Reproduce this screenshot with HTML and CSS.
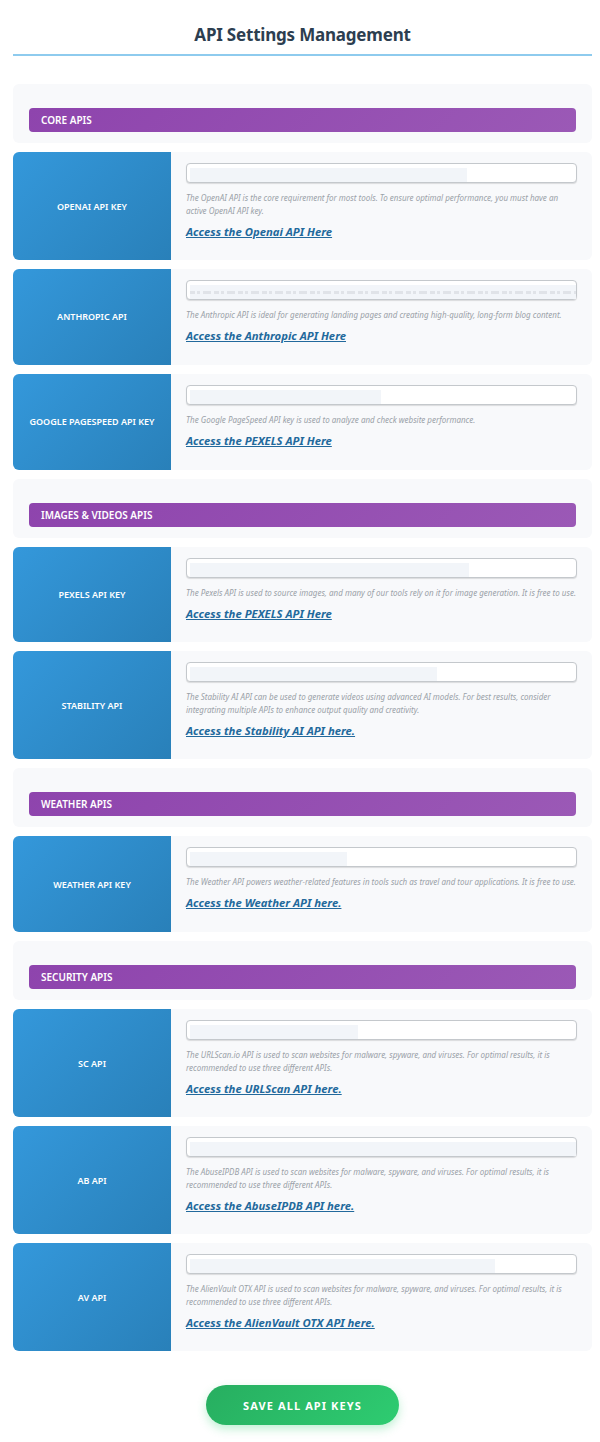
FILE: index.html
```html
<!DOCTYPE html>
<html lang="en">
<head>
    <meta charset="UTF-8">
    <meta name="viewport" content="width=device-width, initial-scale=1.0">
    <title>API Settings Management</title>
    <link rel="stylesheet" href="styles.css">
</head>
<body>
    <div class="wrap">
        <h1 class="page-title">API Settings Management</h1>

        <!-- Core APIs -->
        <div class="group"><h2 class="group-bar">Core APIs</h2></div>

        <div class="row">
            <div class="row-label">OpenAI API Key</div>
            <div class="row-body">
                <div class="key-input"><span class="key-mask" style="width: 277px"></span></div>
                <p class="desc">The OpenAI API is the core requirement for most tools. To ensure optimal performance, you must have an active OpenAI API key.</p>
                <a class="row-link" href="#">Access the Openai API Here</a>
            </div>
        </div>

        <div class="row">
            <div class="row-label">Anthropic API</div>
            <div class="row-body">
                <div class="key-input"><span class="key-mask key-mask-filled" style="width: 386px"></span></div>
                <p class="desc">The Anthropic API is ideal for generating landing pages and creating high-quality, long-form blog content.</p>
                <a class="row-link" href="#">Access the Anthropic API Here</a>
            </div>
        </div>

        <div class="row">
            <div class="row-label">Google PageSpeed API Key</div>
            <div class="row-body">
                <div class="key-input"><span class="key-mask" style="width: 191px"></span></div>
                <p class="desc">The Google PageSpeed API key is used to analyze and check website performance.</p>
                <a class="row-link" href="#">Access the PEXELS API Here</a>
            </div>
        </div>

        <!-- Images & videos -->
        <div class="group"><h2 class="group-bar">Images &amp; Videos APIs</h2></div>

        <div class="row">
            <div class="row-label">Pexels API Key</div>
            <div class="row-body">
                <div class="key-input"><span class="key-mask" style="width: 279px"></span></div>
                <p class="desc">The Pexels API is used to source images, and many of our tools rely on it for image generation. It is free to use.</p>
                <a class="row-link" href="#">Access the PEXELS API Here</a>
            </div>
        </div>

        <div class="row">
            <div class="row-label">Stability API</div>
            <div class="row-body">
                <div class="key-input"><span class="key-mask" style="width: 247px"></span></div>
                <p class="desc">The Stability AI API can be used to generate videos using advanced AI models. For best results, consider integrating multiple APIs to enhance output quality and creativity.</p>
                <a class="row-link" href="#">Access the Stability AI API here.</a>
            </div>
        </div>

        <!-- Weather -->
        <div class="group"><h2 class="group-bar">Weather APIs</h2></div>

        <div class="row">
            <div class="row-label">Weather API Key</div>
            <div class="row-body">
                <div class="key-input"><span class="key-mask" style="width: 157px"></span></div>
                <p class="desc">The Weather API powers weather-related features in tools such as travel and tour applications. It is free to use.</p>
                <a class="row-link" href="#">Access the Weather API here.</a>
            </div>
        </div>

        <!-- Security -->
        <div class="group"><h2 class="group-bar">Security APIs</h2></div>

        <div class="row">
            <div class="row-label">SC API</div>
            <div class="row-body">
                <div class="key-input"><span class="key-mask" style="width: 168px"></span></div>
                <p class="desc">The URLScan.io API is used to scan websites for malware, spyware, and viruses. For optimal results, it is recommended to use three different APIs.</p>
                <a class="row-link" href="#">Access the URLScan API here.</a>
            </div>
        </div>

        <div class="row">
            <div class="row-label">AB API</div>
            <div class="row-body">
                <div class="key-input"><span class="key-mask" style="width: 386px"></span></div>
                <p class="desc">The AbuseIPDB API is used to scan websites for malware, spyware, and viruses. For optimal results, it is recommended to use three different APIs.</p>
                <a class="row-link" href="#">Access the AbuseIPDB API here.</a>
            </div>
        </div>

        <div class="row">
            <div class="row-label">AV API</div>
            <div class="row-body">
                <div class="key-input"><span class="key-mask" style="width: 305px"></span></div>
                <p class="desc">The AlienVault OTX API is used to scan websites for malware, spyware, and viruses. For optimal results, it is recommended to use three different APIs.</p>
                <a class="row-link" href="#">Access the AlienVault OTX API here.</a>
            </div>
        </div>

        <div class="save-wrap">
            <button class="save-btn" type="button">Save All API Keys</button>
        </div>
    </div>
</body>
</html>
```

FILE: styles.css
```css
body {
    margin: 0;
    background-color: #fff;
    font-family: "Noto Sans", "Open Sans", sans-serif;
    color: #2c3e50;
}

.wrap {
    padding: 0 8px 17px 13px;
}

.page-title {
    margin: 0 0 28px;
    padding: 23px 0 7px;
    height: 24px;
    box-sizing: content-box;
    border-bottom: 2px solid #8ecbee;
    font-size: 17px;
    letter-spacing: -0.2px;
    line-height: 24px;
    font-weight: 700;
    text-align: center;
}

.group {
    margin-bottom: 9px;
    padding: 24px 16px 11px;
    background-color: #f8f9fb;
    border-radius: 6px;
}

.group-bar {
    margin: 0;
    height: 24px;
    padding-left: 12px;
    background: linear-gradient(135deg, #8e44ad, #9b59b6);
    border-radius: 4px;
    color: #fff;
    font-size: 10px;
    font-weight: 600;
    line-height: 24px;
    text-transform: uppercase;
}

.row {
    display: flex;
    margin-bottom: 9px;
    background-color: #f8f9fb;
    border-radius: 6px;
}

.row-label {
    flex: 0 0 158px;
    display: flex;
    align-items: center;
    justify-content: center;
    background: linear-gradient(135deg, #3498db, #2980b9);
    border-radius: 6px 0 0 6px;
    color: #fff;
    font-size: 9px;
    font-weight: 600;
    text-align: center;
    text-transform: uppercase;
}

.row-body {
    flex: 1;
    box-sizing: border-box;
    min-height: 95.75px;
    padding: 11px 15px 19px;
}

.key-input {
    display: block;
    box-sizing: border-box;
    height: 20px;
    padding-top: 4px;
    background-color: #fff;
    border: 1px solid #c4c8cc;
    border-radius: 4px;
    box-shadow: 0 1px 1px rgba(0, 0, 0, 0.12);
}

.key-mask {
    display: block;
    height: 14px;
    margin-left: 3px;
    background-color: #f2f5f9;
}

/* the Anthropic field holds a blurred value */
.key-mask-filled {
    background-image: repeating-linear-gradient(90deg, #e0e3e8 0, #e0e3e8 5px, #f2f5f9 5px, #f2f5f9 7px, #e0e3e8 7px, #e0e3e8 10px, #f2f5f9 10px, #f2f5f9 13px, #e0e3e8 13px, #e0e3e8 21px, #f2f5f9 21px, #f2f5f9 24px);
    background-size: 100% 3px;
    background-position: 0 6px;
    background-repeat: no-repeat;
}

.desc {
    margin: 8px 0 2px;
    color: #9aa1a8;
    font-size: 8px;
    font-style: italic;
    line-height: 13px;
}

.row-link {
    color: #22699c;
    font-size: 11.3px;
    font-style: italic;
    font-weight: 700;
    line-height: 16px;
    text-decoration: underline;
}

.save-wrap {
    display: flex;
    justify-content: center;
    padding-top: 25px;
}

.save-btn {
    width: 193px;
    height: 40px;
    background: linear-gradient(135deg, #27ae60, #2ecc71);
    border: 0;
    border-radius: 20px;
    box-shadow: 0 4px 10px rgba(46, 204, 113, 0.3);
    color: #fff;
    font-family: inherit;
    font-size: 11px;
    font-weight: 700;
    letter-spacing: 1.1px;
    text-transform: uppercase;
}
```
